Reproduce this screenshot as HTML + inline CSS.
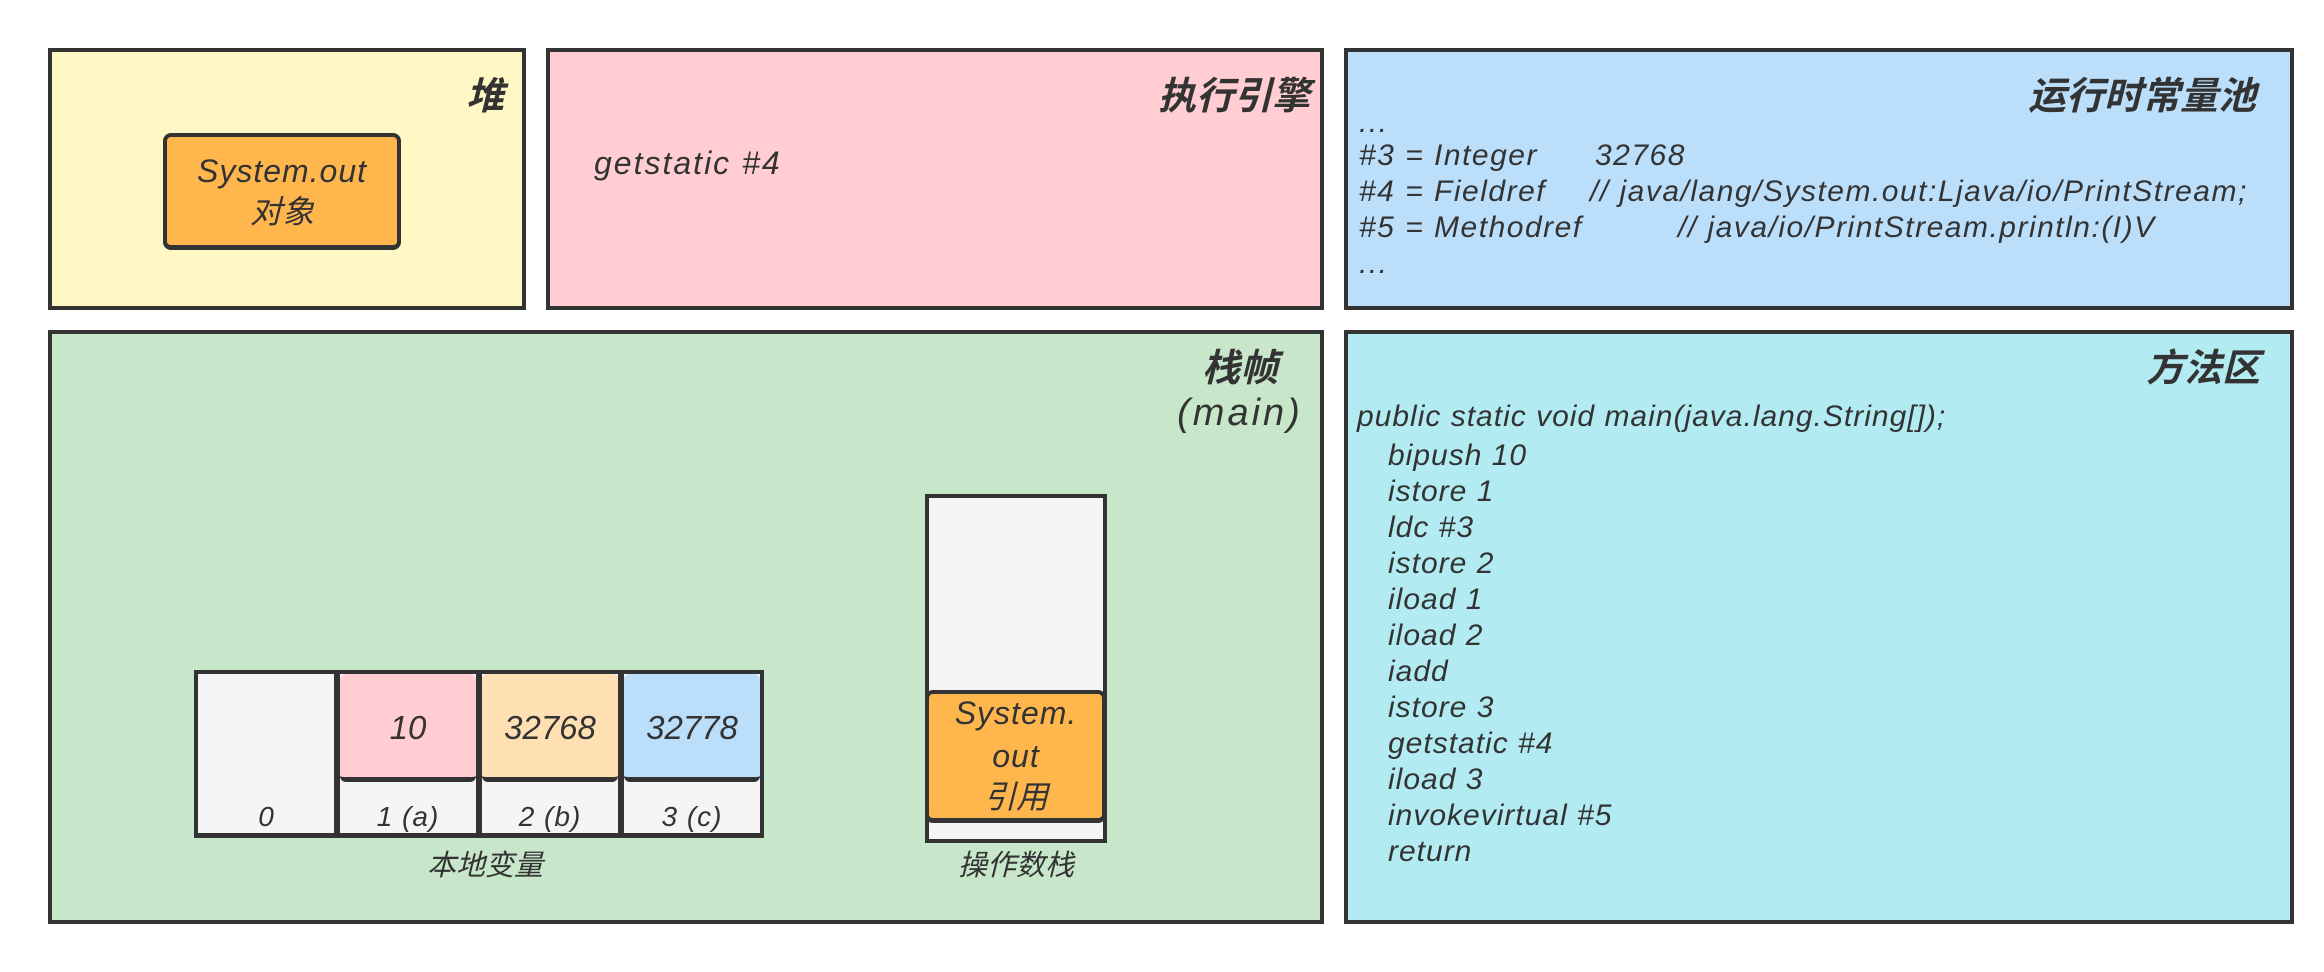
<!DOCTYPE html>
<html><head><meta charset="utf-8"><style>
*{margin:0;padding:0;box-sizing:border-box}
body{width:2324px;height:972px;background:#fff;position:relative;overflow:hidden;font-family:"Liberation Sans","Noto Sans CJK SC",sans-serif;color:#333;font-style:italic}
.b{position:absolute;border:4px solid #333}
.t{position:absolute;white-space:pre;line-height:1}
.title{font-size:38px;font-weight:bold}
.c{text-align:center}
.p{font-size:30px;letter-spacing:1px}
.q{font-size:30px;letter-spacing:1.5px}
</style></head><body>
<!-- heap -->
<div class="b" style="left:48px;top:48px;width:478px;height:262px;background:#fff8c4"></div>
<div class="t title" style="right:1820px;top:78px">堆</div>
<div class="b" style="left:163px;top:133px;width:238px;height:117px;background:#ffb74d;border-radius:8px;border-width:4px 4px 5px 4px"></div>
<div class="t c" style="left:163px;width:238px;top:155px;font-size:32px;letter-spacing:1px">System.out</div>
<div class="t c" style="left:163px;width:238px;top:196px;font-size:32px">对象</div>
<!-- exec -->
<div class="b" style="left:546px;top:48px;width:778px;height:262px;background:#ffcdd2"></div>
<div class="t title" style="right:1014px;top:78px">执行引擎</div>
<div class="t" style="left:594px;top:147px;font-size:32px;letter-spacing:2px">getstatic #4</div>
<!-- pool -->
<div class="b" style="left:1344px;top:48px;width:950px;height:262px;background:#bbdefb"></div>
<div class="t title" style="right:68px;top:78px">运行时常量池</div>
<div class="t q" style="left:1359px;top:108px">...</div>
<div class="t q" style="left:1359px;top:141px">#3 = Integer</div>
<div class="t q" style="left:1595px;top:141px">32768</div>
<div class="t q" style="left:1359px;top:177px">#4 = Fieldref</div>
<div class="t q" style="left:1590px;top:177px">// java/lang/System.out:Ljava/io/PrintStream;</div>
<div class="t q" style="left:1359px;top:213px">#5 = Methodref</div>
<div class="t q" style="left:1678px;top:213px">// java/io/PrintStream.println:(I)V</div>
<div class="t q" style="left:1359px;top:249px">...</div>
<!-- frame -->
<div class="b" style="left:48px;top:330px;width:1276px;height:594px;background:#c8e6c9"></div>
<div class="t title c" style="left:1140px;width:200px;top:350px">栈帧</div>
<div class="t c" style="left:1120px;width:240px;top:394px;font-size:38px;letter-spacing:3px">(main)</div>
<!-- locals -->
<div class="b" style="left:194px;top:670px;width:570px;height:168px;background:#333;border:none"></div>
<div style="position:absolute;left:198px;top:674px;width:136px;height:159px;background:#f5f5f5"></div>
<div style="position:absolute;left:340px;top:674px;width:136px;height:159px;background:#f5f5f5"></div>
<div style="position:absolute;left:482px;top:674px;width:136px;height:159px;background:#f5f5f5"></div>
<div style="position:absolute;left:624px;top:674px;width:136px;height:159px;background:#f5f5f5"></div>
<div style="position:absolute;left:340px;top:674px;width:136px;height:108px;background:#ffcdd2;border-bottom:5px solid #333;border-radius:6px"></div>
<div style="position:absolute;left:482px;top:674px;width:136px;height:108px;background:#ffe0b2;border-bottom:5px solid #333;border-radius:6px"></div>
<div style="position:absolute;left:624px;top:674px;width:136px;height:108px;background:#bbdefb;border-bottom:5px solid #333;border-radius:6px"></div>
<div class="t c" style="left:340px;width:136px;top:711px;font-size:33px">10</div>
<div class="t c" style="left:482px;width:136px;top:711px;font-size:33px">32768</div>
<div class="t c" style="left:624px;width:136px;top:711px;font-size:33px">32778</div>
<div class="t c" style="left:198px;width:136px;top:803px;font-size:28px">0</div>
<div class="t c" style="left:340px;width:136px;top:803px;font-size:28px;letter-spacing:1px">1 (a)</div>
<div class="t c" style="left:482px;width:136px;top:803px;font-size:28px;letter-spacing:1px">2 (b)</div>
<div class="t c" style="left:624px;width:136px;top:803px;font-size:28px;letter-spacing:1px">3 (c)</div>
<div class="t c" style="left:385px;width:200px;top:852px;font-size:29px">本地变量</div>
<!-- operand stack -->
<div class="b" style="left:925px;top:494px;width:182px;height:349px;background:#f5f5f5"></div>
<div class="b" style="left:925px;top:690px;width:181px;height:133px;background:#ffb74d;border-radius:8px;border-width:4px 4px 5px 4px"></div>
<div class="t c" style="left:915px;width:202px;top:697px;font-size:32px;letter-spacing:1px">System.</div>
<div class="t c" style="left:925px;width:182px;top:740px;font-size:32px;letter-spacing:1px">out</div>
<div class="t c" style="left:925px;width:182px;top:781px;font-size:32px">引用</div>
<div class="t c" style="left:916px;width:200px;top:852px;font-size:29px">操作数栈</div>
<!-- method area -->
<div class="b" style="left:1344px;top:330px;width:950px;height:594px;background:#b2ebf2"></div>
<div class="t title" style="right:64px;top:350px">方法区</div>
<div class="t p" style="left:1357px;top:402px">public static void main(java.lang.String[]);</div>
<div class="t p" style="left:1388px;top:438px;line-height:36px">bipush 10
istore 1
ldc #3
istore 2
iload 1
iload 2
iadd
istore 3
getstatic #4
iload 3
invokevirtual #5
return</div>
</body></html>
